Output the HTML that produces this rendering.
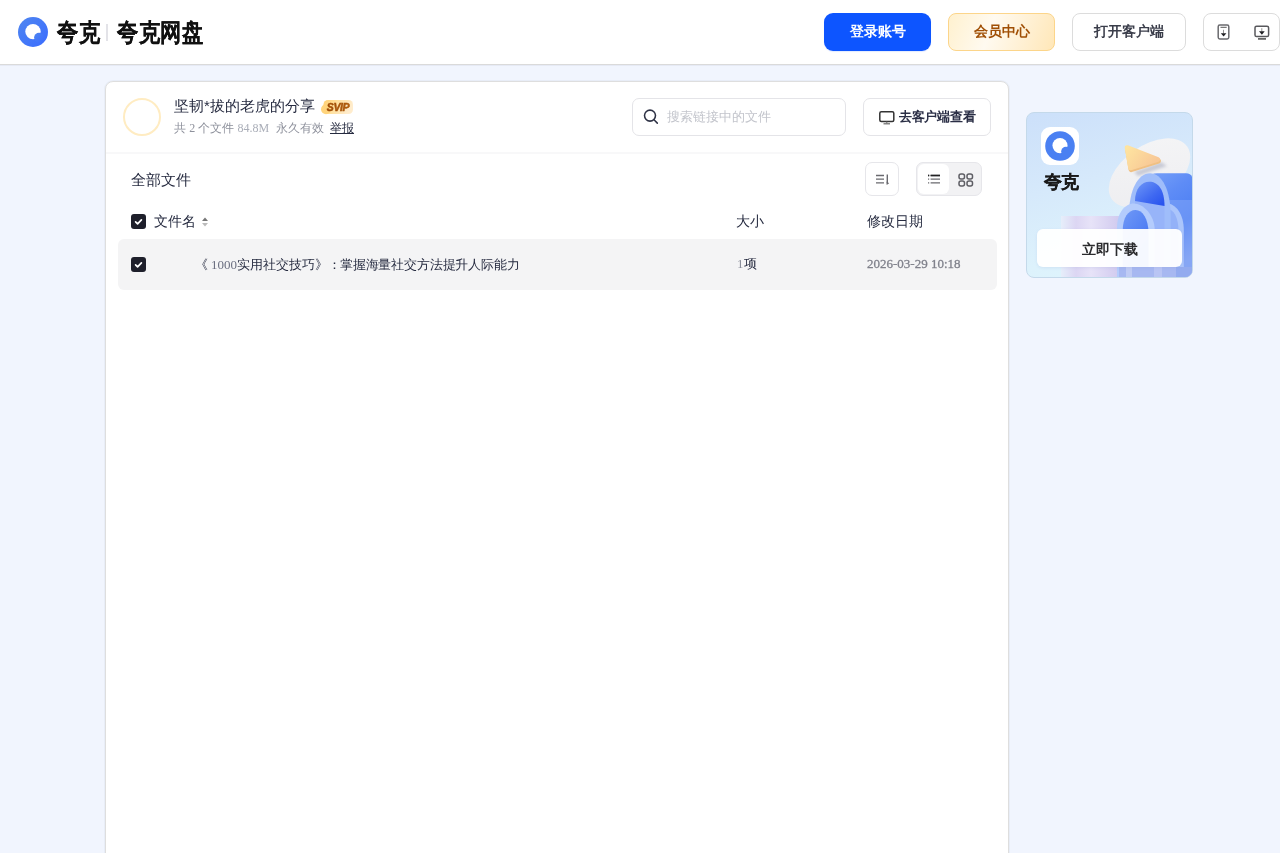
<!DOCTYPE html>
<html><head><meta charset="utf-8">
<style>
*{box-sizing:border-box;margin:0;padding:0}
html,body{width:1280px;height:853px;overflow:hidden}
body{will-change:transform}
body{background:#f1f5fe;font-family:"Liberation Sans",sans-serif;position:relative;color:#262b40}
.abs{position:absolute}
#hdr{position:absolute;left:0;top:0;width:1280px;height:65px;background:#fff;border-bottom:1px solid #dadada;box-shadow:0 1px 0 rgba(30,40,70,0.05)}
.btn{position:absolute;top:13px;height:38px;border-radius:8px;font-size:14px;font-weight:bold;text-align:center;line-height:34px}
#card{position:absolute;left:105px;top:81px;width:904px;height:800px;background:#fff;border:1px solid #dedede;border-radius:8px;box-shadow:0 0 0 1px rgba(30,40,70,0.04)}
.serif{font-family:"Liberation Serif",serif}
</style></head><body>
<div id="hdr">
  <svg class="abs" style="left:17px;top:16px" width="32" height="32" viewBox="0 0 32 32">
    <defs><linearGradient id="lg1" x1="0" y1="0" x2="1" y2="1"><stop offset="0" stop-color="#4f86f0"/><stop offset="1" stop-color="#3a6cff"/></linearGradient></defs>
    <circle cx="16" cy="16" r="15" fill="url(#lg1)"/>
    <circle cx="16" cy="15.6" r="7.7" fill="#fff"/>
    <circle cx="22" cy="21.6" r="4.9" fill="url(#lg1)"/>
  </svg>
  <div class="abs" style="left:57px;top:17px;font-size:24px;font-weight:bold;color:#111;-webkit-text-stroke:0.1px #111;line-height:30px;transform-origin:0 0;transform:scale(0.9,1.06)">夸克</div>
  <div class="abs" style="left:106px;top:24px;width:2px;height:17px;background:#e3e3e8"></div>
  <div class="abs" style="left:117px;top:17px;font-size:24px;font-weight:bold;color:#111;-webkit-text-stroke:0.1px #111;line-height:30px;transform-origin:0 0;transform:scale(0.9,1.06)">夸克网盘</div>

  <div class="btn" style="left:824px;width:107px;background:#0d55ff;color:#fff;line-height:36px;border-radius:9px;box-shadow:0 1px 1px rgba(13,85,255,0.12)">登录账号</div>
  <div class="btn" style="left:948px;width:107px;background:linear-gradient(110deg,#fff1cf 0%,#fffaf0 40%,#ffe7b8 100%);border:1px solid #fcd58a;color:#a04f05">会员中心</div>
  <div class="btn" style="left:1072px;width:114px;background:#fff;border:1px solid #dcdcdc;color:#3a3d4a">打开客户端</div>
  <div class="btn" style="left:1203px;width:77px;background:#fff;border:1px solid #dcdcdc"></div>
  <svg class="abs" style="left:1200px;top:10px" width="80" height="45" viewBox="0 0 80 45">
    <rect x="18.2" y="15.1" width="10.6" height="13.8" rx="1.6" fill="none" stroke="#6a6a6e" stroke-width="1.5"/>
    <path d="M20.5 17.3 H26.7" stroke="#444" stroke-width="0.9"/>
    <path d="M23.5 19.8 V23.5" stroke="#888" stroke-width="0.9"/>
    <path d="M20.8 23.2 H26.4 L23.6 26.6Z" fill="#1e1e22"/>
    <rect x="55" y="16.2" width="13.6" height="10.4" rx="1.6" fill="none" stroke="#58585c" stroke-width="1.5"/>
    <path d="M58 28.9 H66" stroke="#555" stroke-width="1.6"/>
    <path d="M61.8 18.2 V21.5" stroke="#888" stroke-width="0.9"/>
    <path d="M59 21.3 H64.7 L61.9 24.7Z" fill="#1e1e22"/>
  </svg>
</div>

<div id="card">
  <div class="abs" style="left:17px;top:16px;width:38px;height:38px;border-radius:50%;border:2px solid #ffecc2"></div>
  <div class="abs" style="left:68px;top:14px;font-size:15px;line-height:20px;color:#262b40;white-space:nowrap">坚韧*拔的老虎的分享</div>
  <svg class="abs" style="left:213px;top:17px" width="36" height="17" viewBox="0 0 36 17">
    <defs><linearGradient id="sv" x1="0" y1="0" x2="1" y2="0.3"><stop offset="0" stop-color="#ffcf70"/><stop offset="0.45" stop-color="#ffe09c"/><stop offset="1" stop-color="#ffeccc"/></linearGradient>
    <linearGradient id="svt" x1="0" y1="0" x2="1" y2="0"><stop offset="0" stop-color="#9c4a06"/><stop offset="1" stop-color="#b9650c"/></linearGradient></defs>
    <rect x="4.5" y="1" width="29.5" height="14" rx="4.5" fill="url(#sv)"/>
    <circle cx="7" cy="10.2" r="5" fill="#ffd47c"/>
    <text x="19" y="12.2" text-anchor="middle" font-family="Liberation Sans" font-weight="bold" font-style="italic" font-size="10.5" fill="url(#svt)" letter-spacing="-0.4" stroke="#a04e08" stroke-width="0.45">SVIP</text>
  </svg>
  <div class="abs" style="left:68px;top:38px;font-size:12px;line-height:16px;color:#8e919c;white-space:nowrap;word-spacing:-0.15px">共 <span class="serif">2</span> 个文件 <span class="serif" style="color:#aaaeb8">84.8M</span>&nbsp; 永久有效 &nbsp;<span style="color:#262b40;text-decoration:underline">举报</span></div>

  <div class="abs" style="left:526px;top:16px;width:214px;height:38px;border:1px solid #e4e4e8;border-radius:7px;background:#fff">
    <svg class="abs" style="left:10px;top:10px" width="17" height="17" viewBox="0 0 17 17"><circle cx="7" cy="6.6" r="5.5" fill="none" stroke="#2e3245" stroke-width="1.55"/><path d="M11 10.8 L14.3 14.1" stroke="#2e3245" stroke-width="1.5" stroke-linecap="round"/></svg>
    <div class="abs" style="left:34px;top:9px;font-size:13px;line-height:18px;color:#c3c5cc;white-space:nowrap">搜索链接中的文件</div>
  </div>
  <div class="abs" style="left:757px;top:16px;width:128px;height:38px;border:1px solid #e4e4e8;border-radius:7px;background:#fff">
    <svg class="abs" style="left:15px;top:12px" width="16" height="14" viewBox="0 0 16 14"><rect x="0.8" y="0.8" width="14" height="9.6" rx="1.5" fill="none" stroke="#333" stroke-width="1.5"/><path d="M7.8 10.5 V12.3" stroke="#666" stroke-width="1"/><path d="M4.5 12.8 H11" stroke="#666" stroke-width="1.2"/></svg>
    <div class="abs" style="left:35px;top:9px;font-size:13px;line-height:18px;font-weight:bold;color:#2a2e45;white-space:nowrap;letter-spacing:-0.3px">去客户端查看</div>
  </div>
  <div class="abs" style="left:0;top:70px;width:902px;height:2px;background:#f8f8f9"></div>

  <div class="abs" style="left:25px;top:88px;font-size:15px;line-height:20px;color:#262b40;white-space:nowrap">全部文件</div>
  <div class="abs" style="left:759px;top:80px;width:34px;height:34px;border:1px solid #e6e6ea;border-radius:7px;background:#fff">
    <svg class="abs" style="left:9px;top:11px" width="16" height="12" viewBox="0 0 16 12"><path d="M1 1.5H9M1 5.2H9M1 8.9H9" stroke="#6a6a6f" stroke-width="1.3"/><path d="M12.3 0.5V9.5" stroke="#6a6a6f" stroke-width="1.4"/><path d="M11.6 7.5 L14.2 9.3 L11.6 11Z" fill="#6a6a6f"/></svg>
  </div>
  <div class="abs" style="left:810px;top:80px;width:66px;height:34px;border:1px solid #e6e6ea;border-radius:7px;background:#f2f2f4">
    <div class="abs" style="left:1px;top:1px;width:31px;height:30px;border-radius:6px;background:#fff"></div>
    <svg class="abs" style="left:10px;top:11px" width="14" height="12" viewBox="0 0 14 12"><path d="M1 1.5H2.2M1 5.2H2.2M1 8.9H2.2M3.6 1.5H13M3.6 5.2H13M3.6 8.9H13" stroke="#6a6a6f" stroke-width="1.3"/><path d="M1 1.5H2.2M3.6 1.5H13" stroke="#222" stroke-width="1.3"/></svg>
    <svg class="abs" style="left:41px;top:10px" width="16" height="14" viewBox="0 0 16 14"><rect x="1" y="1" width="5.5" height="5" rx="2" fill="none" stroke="#5e5e64" stroke-width="1.5"/><rect x="9" y="1" width="5.5" height="5" rx="2" fill="none" stroke="#5e5e64" stroke-width="1.5"/><rect x="1" y="8" width="5.5" height="5" rx="2" fill="none" stroke="#5e5e64" stroke-width="1.5"/><rect x="9" y="8" width="5.5" height="5" rx="2" fill="none" stroke="#5e5e64" stroke-width="1.5"/></svg>
  </div>

  <div class="abs" style="left:25px;top:132px;width:15px;height:15px;border-radius:3px;background:#1e1f2b">
    <svg class="abs" style="left:0;top:0" width="15" height="15" viewBox="0 0 15 15"><path d="M4.6 7.8 L6.6 9.8 L10.4 5.8" fill="none" stroke="#fff" stroke-width="1.7" stroke-linecap="round" stroke-linejoin="round"/></svg>
  </div>
  <div class="abs" style="left:48px;top:129px;font-size:14px;line-height:20px;color:#262b40;white-space:nowrap">文件名</div>
  <svg class="abs" style="left:95px;top:134px" width="8" height="12" viewBox="0 0 8 12"><path d="M1 5 L4 1.5 L7 5Z" fill="#777"/><path d="M1 7 L4 10.5 L7 7Z" fill="#bbb"/></svg>
  <div class="abs" style="left:630px;top:129px;font-size:14px;line-height:20px;color:#262b40;white-space:nowrap">大小</div>
  <div class="abs" style="left:761px;top:129px;font-size:14px;line-height:20px;color:#262b40;white-space:nowrap">修改日期</div>

  <div class="abs" style="left:12px;top:157px;width:879px;height:51px;border-radius:6px;background:#f4f4f5">
    <div class="abs" style="left:13px;top:18px;width:15px;height:15px;border-radius:3px;background:#1e1f2b">
      <svg class="abs" style="left:0;top:0" width="15" height="15" viewBox="0 0 15 15"><path d="M4.6 7.8 L6.6 9.8 L10.4 5.8" fill="none" stroke="#fff" stroke-width="1.7" stroke-linecap="round" stroke-linejoin="round"/></svg>
    </div>
    <div class="abs" style="left:77px;top:16.5px;font-size:13px;line-height:18px;color:#262b40;white-space:nowrap">《<span class="serif" style="color:#6b6f80;margin-left:3px">1000</span>实用社交技巧》：<span style="margin-left:-1px;letter-spacing:-0.17px">掌握海量社交方法提升人际能力</span></div>
    <div class="abs" style="left:619px;top:16px;font-size:13px;line-height:18px;color:#262b40;white-space:nowrap"><span class="serif" style="color:#8a8e9a">1</span>项</div>
    <div class="abs" style="left:749px;top:16px;font-size:13px;line-height:18px;color:#80828c;white-space:nowrap;-webkit-text-stroke:0.3px #80828c"><span class="serif">2026-03-29 10:18</span></div>
  </div>
</div>
<div id="banner" class="abs" style="left:1026px;top:112px;width:167px;height:166px;border-radius:8px;overflow:hidden;border:1px solid #c4d9ea;background:linear-gradient(165deg,#cce0fa 0%,#d6e9fb 40%,#ddf2fc 75%,#def5fc 100%)">
  <svg class="abs" style="left:-1px;top:-1px" width="167" height="166" viewBox="0 0 167 166">
    <defs>
      <linearGradient id="tri" x1="0" y1="0" x2="1" y2="0.5"><stop offset="0" stop-color="#fee4a0"/><stop offset="1" stop-color="#f8c896"/></linearGradient>
      <linearGradient id="disc" x1="0" y1="1" x2="1" y2="0"><stop offset="0" stop-color="#ededf0"/><stop offset="1" stop-color="#f5f5f6"/></linearGradient>
      <linearGradient id="side" x1="0" y1="0" x2="0.3" y2="1"><stop offset="0" stop-color="#76a0f8"/><stop offset="0.3" stop-color="#5e8cf6"/><stop offset="0.65" stop-color="#4b7ef3"/><stop offset="1" stop-color="#86a4f1"/></linearGradient>
      <linearGradient id="hole" x1="0" y1="0" x2="1" y2="1"><stop offset="0" stop-color="#6f98f7"/><stop offset="0.6" stop-color="#3e68f1"/><stop offset="1" stop-color="#2550ee"/></linearGradient>
      <linearGradient id="hole2" x1="0" y1="0" x2="0.6" y2="1"><stop offset="0" stop-color="#7099f6"/><stop offset="1" stop-color="#3f70f2"/></linearGradient>
      <linearGradient id="face2" x1="0" y1="0" x2="0" y2="1"><stop offset="0" stop-color="#a4c0fb"/><stop offset="1" stop-color="#86a6f6"/></linearGradient>
      <linearGradient id="purp" x1="0" y1="0" x2="1" y2="0"><stop offset="0" stop-color="#e6eefa"/><stop offset="0.25" stop-color="#dcd6f3"/><stop offset="0.5" stop-color="#e7e3f8"/><stop offset="0.8" stop-color="#d9d3f2"/><stop offset="1" stop-color="#cfc9ef"/></linearGradient>
      <filter id="blur1" x="-50%" y="-50%" width="200%" height="200%"><feGaussianBlur stdDeviation="1.5"/></filter>
    </defs>
    <rect x="35" y="104" width="60" height="62" fill="url(#purp)"/>
    <ellipse cx="123.5" cy="60.8" rx="46" ry="27" transform="rotate(-35 123.5 60.8)" fill="url(#disc)"/>
    <path d="M108 60 L135 50 L141 54 L112 64Z" fill="#9ea3b8" opacity="0.5" filter="url(#blur1)"/>
    <path d="M101 35.5 L131.8 47.5 L104.5 56 Z" fill="#f0c083" stroke="#f0c083" stroke-width="5" stroke-linejoin="round" transform="translate(0.6 1.6)"/>
    <path d="M101 35.5 L131.8 47.5 L104.5 56 Z" fill="url(#tri)" stroke="url(#tri)" stroke-width="4.6" stroke-linejoin="round"/>
    <path d="M124 166 V67 Q124 61.2 131 61.2 H160 Q166.5 61.2 166.5 68 V166 Z" fill="url(#side)"/>
    <rect x="140" y="88" width="27" height="78" fill="#86a8f8" opacity="0.5"/>
    <path d="M128 166 V107 C128 97.5 134 91.6 141 91.6 C149.5 91.6 157.8 102 157.8 118 V166 Z" fill="#abc5fb"/>
    <path d="M133.5 166 V109 C133.5 101.5 137 97 141 97 C147.5 97 152.5 105 152.5 119 V166 Z" fill="#93b1f8"/>
    <path d="M102.9 166 V104 C102.9 78 112 61.2 124 61.2 C136 61.2 144.7 78 144.7 104 V166 Z" fill="#9fbdfa"/>
    <path d="M109 166 V90 C109 77 115.5 69.8 123.5 69.8 C131.5 69.8 138.5 77 138.5 94 V166 Z" fill="#97b4f9"/>
    <path d="M109 89 C109 77 115.5 69.8 123.5 69.8 C131.5 69.8 138.5 77 138.5 94 Z" fill="url(#hole)"/>
    <path d="M91 166 V116 C91 101 99 91.6 107.8 91.6 C117 91.6 128.7 103 128.7 118 V166 Z" fill="#b4ccfc"/>
    <path d="M96.7 155 V119 C96.7 106 102 98.1 109.6 98.1 C116.5 98.1 122.5 107 122.5 121 V155 Z" fill="url(#hole2)"/>
    <rect x="93" y="155" width="74" height="11" fill="#a7b8f1"/>
    <rect x="100" y="155" width="6" height="11" fill="#c5cff5" opacity="0.8"/>
    <rect x="128" y="155" width="8" height="11" fill="#c0cbf5" opacity="0.7"/>
    <rect x="150" y="155" width="17" height="11" fill="#8ea7ef" opacity="0.8"/>
  </svg>
  <div class="abs" style="left:14px;top:14px;width:38px;height:38px;border-radius:9px;background:#fff">
    <svg class="abs" style="left:4px;top:4px" width="30" height="30" viewBox="0 0 30 30">
      <circle cx="15" cy="15" r="14.8" fill="#4a80f2"/>
      <circle cx="15" cy="14.6" r="7.55" fill="#fff"/>
      <circle cx="20.9" cy="20.5" r="4.75" fill="#4a80f2"/>
    </svg>
  </div>
  <div class="abs" style="left:17px;top:58px;font-size:18px;line-height:22px;font-weight:bold;color:#1a1a1a;letter-spacing:-1px;-webkit-text-stroke:0.2px #1a1a1a">夸克</div>
  <div class="abs" style="left:10px;top:116px;width:145px;height:38px;border-radius:6px;background:rgba(255,255,255,0.95);box-shadow:0 1px 3px rgba(120,140,200,0.15);text-align:center;line-height:40px;font-size:14px;font-weight:bold;color:#2b2b2e">立即下载</div>
</div>
</body></html>
